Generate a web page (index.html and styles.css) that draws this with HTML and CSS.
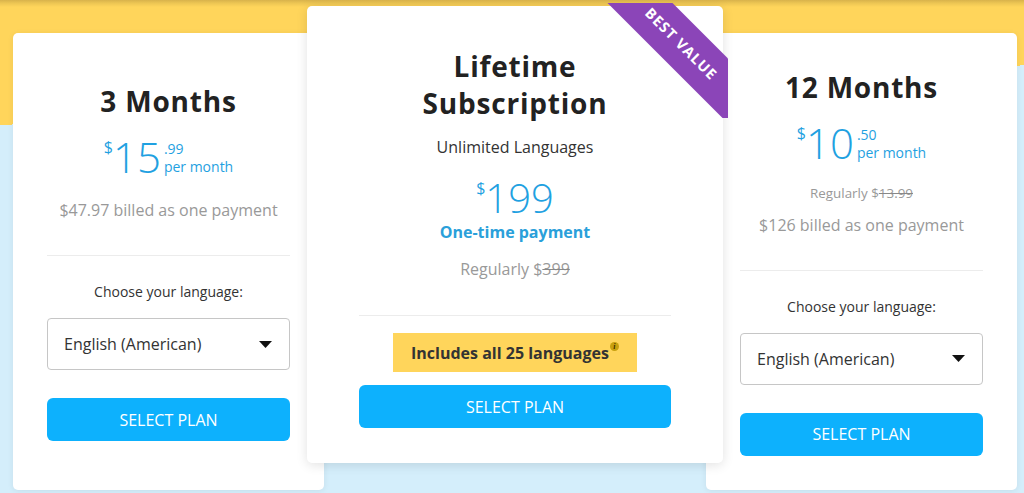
FILE: index.html
```html
<!DOCTYPE html>
<html lang="en">
<head>
<meta charset="utf-8">
<title>Plans</title>
<link rel="stylesheet" href="styles.css">
</head>
<body>
<div class="page">
  <div class="plans">
    <div class="card card-side">
      <h2 class="plan-title">3 Months</h2>
      <div class="price">
        <span class="cur">$</span><span class="amount">15</span>
        <span class="price-meta"><span>.99</span><span>per month</span></span>
      </div>
      <p class="billed">$47.97 billed as one payment</p>
      <hr class="divider">
      <p class="choose">Choose your language:</p>
      <div class="select">
        <span>English (American)</span>
        <svg class="caret" width="13" height="7" viewBox="0 0 13 7"><path d="M0 0H13L6.5 7Z" fill="#111"/></svg>
      </div>
      <button class="btn">SELECT PLAN</button>
    </div>

    <div class="card card-main">
      <div class="ribbon-clip"><div class="ribbon">BEST VALUE</div></div>
      <h2 class="plan-title plan-title-main">Lifetime<br>Subscription</h2>
      <p class="subtitle">Unlimited Languages</p>
      <div class="price price-main">
        <span class="cur">$</span><span class="amount">199</span>
      </div>
      <p class="onetime">One-time payment</p>
      <p class="regular">Regularly $<s>399</s></p>
      <hr class="divider divider-main">
      <div class="badge">Includes all 25 languages<span class="info">i</span></div>
      <button class="btn btn-main">SELECT PLAN</button>
    </div>

    <div class="card card-side">
      <h2 class="plan-title">12 Months</h2>
      <div class="price">
        <span class="cur">$</span><span class="amount">10</span>
        <span class="price-meta"><span>.50</span><span>per month</span></span>
      </div>
      <p class="regular-small">Regularly $<s>13.99</s></p>
      <p class="billed billed-tight">$126 billed as one payment</p>
      <hr class="divider">
      <p class="choose">Choose your language:</p>
      <div class="select">
        <span>English (American)</span>
        <svg class="caret" width="13" height="7" viewBox="0 0 13 7"><path d="M0 0H13L6.5 7Z" fill="#111"/></svg>
      </div>
      <button class="btn">SELECT PLAN</button>
    </div>
  </div>
</div>
</body>
</html>
```

FILE: styles.css
```css
html, body {
  margin: 0;
  padding: 0;
}
body {
  font-family: "Open Sans", "Noto Sans", "Liberation Sans", sans-serif;
  color: #333;
}
.page {
  width: 1024px;
  height: 493px;
  overflow: hidden;
  background:
    linear-gradient(180deg, #d8b24b 0, #ecc553 3px, rgba(255, 213, 90, 0) 7px),
    linear-gradient(176.65deg, #ffd55b 125px, #d4eefb 125px);
}
.plans {
  display: flex;
  align-items: flex-start;
  padding-left: 13px;
}
.card {
  box-sizing: border-box;
  height: 457px;
  background: #fff;
  border-radius: 5px;
  display: flex;
  flex-direction: column;
  text-align: center;
  box-shadow: 0 1px 6px rgba(0, 0, 0, 0.07);
}
.card-side {
  width: 311px;
  margin-top: 33px;
  padding: 0 34px;
  justify-content: center;
}
.card-main {
  position: relative;
  z-index: 2;
  width: 416px;
  margin: 6px -17px 0;
  padding: 42px 52px 0;
  justify-content: flex-start;
  box-shadow: 0 2px 12px rgba(0, 0, 0, 0.12);
}
.plan-title {
  margin: 0;
  font-size: 28px;
  line-height: 38px;
  font-weight: 700;
  letter-spacing: 0.8px;
  color: #222;
}
.plan-title-main {
  line-height: 37px;
}
.price {
  display: flex;
  justify-content: center;
  align-items: flex-start;
  color: #1fa1e1;
  margin-top: 16px;
}
.cur {
  font-size: 16px;
  line-height: 16px;
  margin-top: 3px;
}
.amount {
  font-size: 42px;
  line-height: 42px;
  font-weight: 300;
}
.price-meta {
  display: flex;
  flex-direction: column;
  align-items: flex-start;
  font-size: 14px;
  line-height: 18px;
  margin-top: 4px;
  margin-left: 3px;
}
.price-main {
  margin-top: 20px;
}
.price-main .amount {
  font-size: 40px;
  line-height: 40px;
}
.price-main .cur {
  margin-top: 2px;
}
.billed {
  margin: 21px 0 0;
  font-size: 16px;
  line-height: 22px;
  color: #999;
}
.billed-tight {
  margin-top: 12px;
}
.regular-small {
  margin: 20px 0 0;
  font-size: 13.4px;
  line-height: 18px;
  color: #999;
}
.regular {
  margin: 15px 0 0;
  font-size: 16px;
  line-height: 22px;
  color: #999;
}
s {
  text-decoration-color: #888;
}
.divider {
  border: 0;
  border-top: 1px solid #ececec;
  height: 0;
  margin: 34px 0 0;
}
.divider-main {
  margin-top: 35px;
}
.choose {
  margin: 26px 0 0;
  font-size: 14px;
  line-height: 20px;
  color: #333;
}
.select {
  box-sizing: border-box;
  height: 52px;
  margin-top: 16px;
  border: 1px solid #c6c6c6;
  border-radius: 4px;
  display: flex;
  align-items: center;
  justify-content: space-between;
  padding: 0 17px 0 16px;
  font-size: 16px;
  color: #333;
}
.btn {
  height: 43px;
  margin-top: 28px;
  border: 0;
  border-radius: 6px;
  background: #0db1fd;
  color: #fff;
  font-family: "Open Sans", "Noto Sans", "Liberation Sans", sans-serif;
  font-size: 16px;
  width: 100%;
  padding: 0;
}
.btn-main {
  margin-top: 13px;
}
.subtitle {
  margin: 14px 0 0;
  font-size: 16px;
  line-height: 22px;
  color: #333;
}
.onetime {
  margin: 3px 0 0;
  font-size: 16px;
  line-height: 22px;
  font-weight: 700;
  color: #2aa0da;
}
.badge {
  align-self: center;
  margin-top: 17px;
  height: 39px;
  padding: 0 18px;
  background: #ffd55b;
  display: flex;
  align-items: center;
  font-size: 16px;
  font-weight: 700;
  color: #333;
}
.info {
  align-self: flex-start;
  margin-top: 9px;
  margin-left: 1px;
  width: 9px;
  height: 9px;
  border-radius: 50%;
  background: #c9a10f;
  color: #3d2f00;
  font-family: "Liberation Serif", serif;
  font-style: italic;
  font-size: 8px;
  line-height: 9px;
  font-weight: 700;
  text-align: center;
}
.ribbon-clip {
  position: absolute;
  top: -3px;
  right: -5px;
  width: 128px;
  height: 115px;
  overflow: hidden;
}
.ribbon {
  position: absolute;
  left: -29px;
  top: 18px;
  width: 220px;
  height: 46px;
  transform: rotate(45deg);
  background: #8b45b8;
  color: #fff;
  font-size: 14.5px;
  font-weight: 700;
  letter-spacing: 1px;
  line-height: 46px;
  text-align: center;
}
```
